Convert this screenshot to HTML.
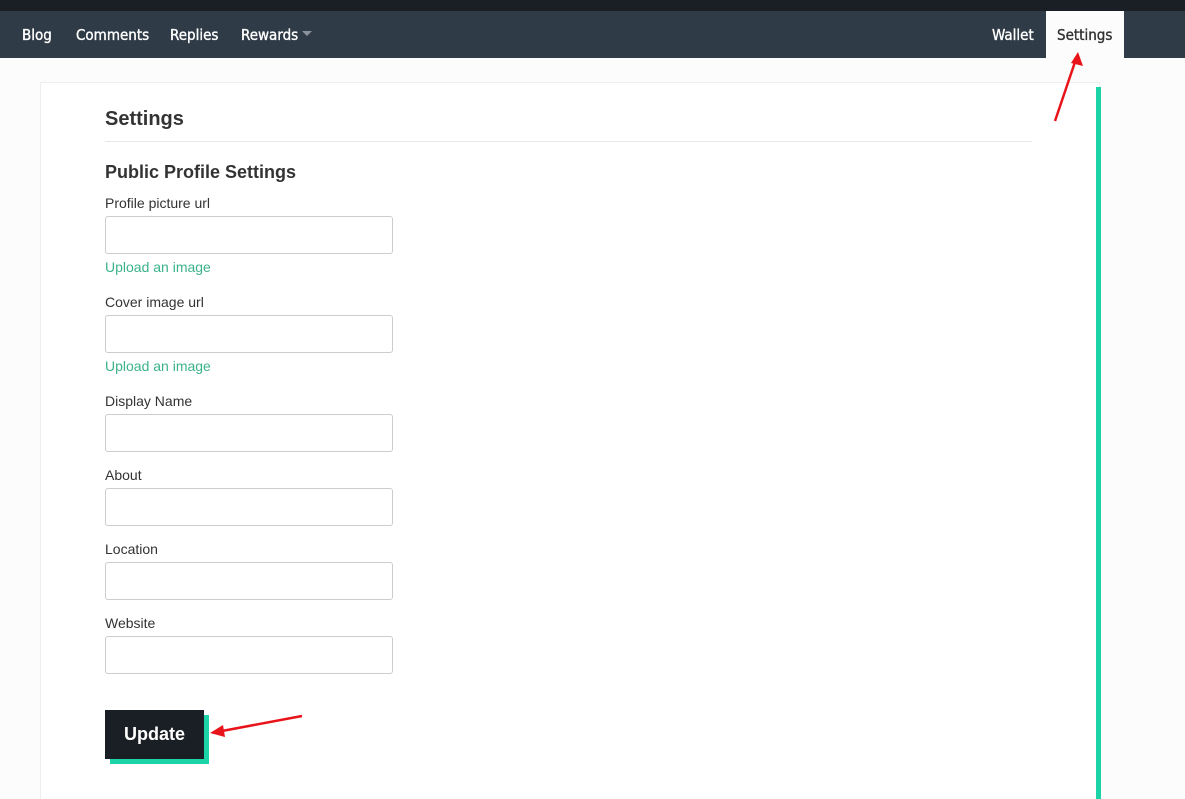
<!DOCTYPE html>
<html style="width:1185px;height:799px;overflow:hidden"><head><meta charset="utf-8"><style>
*{box-sizing:border-box;margin:0;padding:0}
body{width:1185px;height:799px;background:#fcfcfc;font-family:"Liberation Sans",sans-serif;position:relative;overflow:hidden;color:#333}
.top{position:absolute;left:0;top:0;width:1185px;height:11px;background:#1a1f26}
.nav{position:absolute;left:0;top:11px;width:1185px;height:47px;background:#2f3b47}
.nav span{position:absolute;top:15px;color:#fff;font-size:15px;font-family:"DejaVu Sans Condensed","Liberation Sans",sans-serif;-webkit-text-stroke:0.35px #fff}
.set{position:absolute;left:1046px;top:11px;width:78px;height:47px;background:#fcfcfc}
.card{position:absolute;left:40px;top:82px;width:1060px;height:717px;background:#fff;border:1px solid #eee;border-bottom:none}
.bar{position:absolute;left:1096px;top:87px;width:5px;height:712px;background:#1dd4a9}
h1{position:absolute;left:105px;top:108px;font-size:20px;font-weight:bold;color:#333}
.hr{position:absolute;left:105px;top:141px;width:927px;height:1px;background:#e8e8e8}
h2{position:absolute;left:105px;top:162px;font-size:18px;font-weight:bold;color:#333}
.l{position:absolute;left:105px;font-size:14px;color:#333}
.i{position:absolute;left:105px;width:288px;height:38px;border:1px solid #ccc;border-radius:3px;background:#fff}
.u{position:absolute;left:105px;font-size:14px;color:#3bb38a}
.sh{position:absolute;left:110px;top:715px;width:99px;height:49px;background:#1dd4a9}
.btn{position:absolute;left:105px;top:710px;width:99px;height:49px;background:#1a1f26;color:#fff;font-weight:bold;font-size:18px;text-align:center;line-height:49px}
</style></head><body>
<div class="top"></div>
<div class="nav">
<span style="left:22px">Blog</span>
<span style="left:76px">Comments</span>
<span style="left:170px">Replies</span>
<span style="left:241px">Rewards</span>
<svg style="position:absolute;left:302px;top:20px" width="10" height="6"><path d="M0 0H10L5 5Z" fill="#8a939c"/></svg>
<span style="left:992px">Wallet</span>
</div>
<div class="set"><span style="position:absolute;left:11px;top:15px;font-size:15px;color:#333;font-family:'DejaVu Sans Condensed','Liberation Sans',sans-serif;-webkit-text-stroke:0.35px #333">Settings</span></div>
<div class="card"></div>
<div class="bar"></div>
<h1>Settings</h1>
<div class="hr"></div>
<h2>Public Profile Settings</h2>
<div class="l" style="top:195px">Profile picture url</div>
<div class="i" style="top:216px"></div>
<div class="u" style="top:259px">Upload an image</div>
<div class="l" style="top:294px">Cover image url</div>
<div class="i" style="top:315px"></div>
<div class="u" style="top:358px">Upload an image</div>
<div class="l" style="top:393px">Display Name</div>
<div class="i" style="top:414px"></div>
<div class="l" style="top:467px">About</div>
<div class="i" style="top:488px"></div>
<div class="l" style="top:541px">Location</div>
<div class="i" style="top:562px"></div>
<div class="l" style="top:615px">Website</div>
<div class="i" style="top:636px"></div>
<div class="sh"></div>
<div class="btn">Update</div>
<svg style="position:absolute;left:0;top:0" width="1185" height="799">
<g stroke="#e8141a" stroke-width="2.5" fill="#e8141a">
<line x1="1055" y1="121" x2="1075" y2="62"/>
<path d="M1078 52L1083 66L1071 63Z" stroke="none"/>
<line x1="302" y1="716" x2="222" y2="731"/>
<path d="M210 733L223 725L225 737Z" stroke="none"/>
</g></svg>
</body></html>
